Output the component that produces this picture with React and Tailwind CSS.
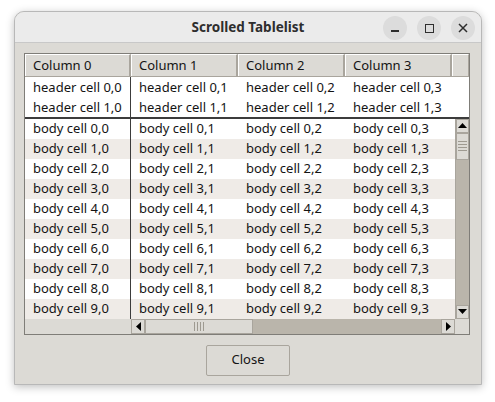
import React from "react";

const cols = [0, 1, 2, 3];
const bodyRows = [0, 1, 2, 3, 4, 5, 6, 7, 8, 9];

const ArrowUp = () => (
  <svg width="9" height="5" viewBox="0 0 9 5">
    <polygon points="0,5 9,5 4.5,0" fill="#000" />
  </svg>
);
const ArrowDown = () => (
  <svg width="9" height="5" viewBox="0 0 9 5">
    <polygon points="0,0 9,0 4.5,5" fill="#000" />
  </svg>
);
const ArrowLeft = () => (
  <svg width="5" height="9" viewBox="0 0 5 9">
    <polygon points="5,0 5,9 0,4.5" fill="#000" />
  </svg>
);
const ArrowRight = () => (
  <svg width="5" height="9" viewBox="0 0 5 9">
    <polygon points="0,0 0,9 5,4.5" fill="#000" />
  </svg>
);

const App = () => {
  return (
    <div
      className="w-[495px] h-[402px] bg-white pt-[11px] pl-[14px] text-[13px] text-[#141414]"
      style={{ fontFamily: '"Noto Sans", sans-serif' }}
    >
      <div className="w-[468px] h-[374px] flex flex-col rounded-t-[10px] border border-[#b8b8b8] bg-[#dcdad5] shadow-[0_2px_8px_rgba(0,0,0,0.25)] overflow-hidden">
        {/* title bar */}
        <div className="h-[31px] shrink-0 bg-[#ebebeb] border-b border-[#c8c8c8] flex items-center relative">
          <div className="flex-1 text-center font-bold text-[13.5px] text-[#2e2e2e]">Scrolled Tablelist</div>
          <div className="absolute right-[6px] top-[4px] flex gap-[10px]">
            <div className="w-[24px] h-[24px] rounded-full bg-[#dcdcdc] flex items-center justify-center">
              <div className="w-[8px] h-[1.5px] bg-[#2e2e2e] mt-[6px]" />
            </div>
            <div className="w-[24px] h-[24px] rounded-full bg-[#dcdcdc] flex items-center justify-center">
              <div className="w-[9px] h-[9px] border-[1.5px] border-[#2e2e2e]" />
            </div>
            <div className="w-[24px] h-[24px] rounded-full bg-[#dcdcdc] flex items-center justify-center">
              <svg width="10" height="10" viewBox="0 0 10 10">
                <path d="M1 1 L9 9 M9 1 L1 9" stroke="#2e2e2e" strokeWidth="1.5" />
              </svg>
            </div>
          </div>
        </div>

        {/* content */}
        <div className="flex-1 flex flex-col px-[9px] pt-[10px]">
          <div className="w-[446px] border border-[#7f7d78] bg-[#dcdad5]">
            {/* column headers */}
            <div className="flex h-[23px] border-b border-[#a9a59d]">
              {cols.map((c) => (
                <div
                  key={c}
                  className={`${c === 0 ? "w-[106px]" : "w-[107px]"} h-full flex items-center pl-[7px] pt-px border-t border-l border-white border-r-2 border-r-[#a9a59d]`}
                >
                  Column {c}
                </div>
              ))}
              <div className="flex-1 h-full border-t border-l border-white border-r border-r-[#a9a59d]" />
            </div>

            {/* title rows */}
            <div className="bg-white">
              {[0, 1].map((r) => (
                <div key={r} className="flex h-[20px]">
                  {cols.map((c) => (
                    <div
                      key={c}
                      className={`${c === 0 ? "w-[106px] border-r border-[#3c3c3c]" : "w-[107px]"} h-full flex items-center pl-[8px] pt-px whitespace-nowrap`}
                    >
                      header cell {r},{c}
                    </div>
                  ))}
                </div>
              ))}
            </div>
            <div className="h-[1.5px] bg-[#3c3c3c]" />

            {/* body + vertical scrollbar */}
            <div className="flex">
              <div className="w-[430px]">
                {bodyRows.map((r) => (
                  <div key={r} className={`flex h-[20px] ${r % 2 ? "bg-[#efebe7]" : "bg-white"}`}>
                    {cols.map((c) => (
                      <div
                        key={c}
                        className={`${c === 0 ? "w-[106px] border-r border-[#3c3c3c]" : "w-[107px]"} h-full flex items-center pl-[8px] pt-px whitespace-nowrap`}
                      >
                        body cell {r},{c}
                      </div>
                    ))}
                  </div>
                ))}
              </div>
              <div className="w-[14px] h-[200px] bg-[#bab5ab] flex flex-col border-l border-[#a9a59d]">
                <div className="h-[14px] bg-[#dcdad5] border border-[#a9a59d] flex items-center justify-center">
                  <ArrowUp />
                </div>
                <div className="h-[27px] bg-[#dcdad5] border border-[#a9a59d] flex flex-col items-center justify-center gap-[2px]">
                  <div className="w-[9px] h-px bg-[#9e9a91]" />
                  <div className="w-[9px] h-px bg-[#9e9a91]" />
                  <div className="w-[9px] h-px bg-[#9e9a91]" />
                  <div className="w-[9px] h-px bg-[#9e9a91]" />
                </div>
                <div className="flex-1" />
                <div className="h-[14px] bg-[#dcdad5] border border-[#a9a59d] flex items-center justify-center">
                  <ArrowDown />
                </div>
              </div>
            </div>

            {/* horizontal scrollbar */}
            <div className="flex h-[15px]">
              <div className="w-[106px]" />
              <div className="w-[324px] bg-[#bab5ab] flex">
                <div className="w-[14px] bg-[#dcdad5] border border-[#a9a59d] flex items-center justify-center">
                  <ArrowLeft />
                </div>
                <div className="w-[108px] bg-[#dcdad5] border border-[#a9a59d] flex items-center justify-center gap-[2px]">
                  <div className="w-px h-[9px] bg-[#9e9a91]" />
                  <div className="w-px h-[9px] bg-[#9e9a91]" />
                  <div className="w-px h-[9px] bg-[#9e9a91]" />
                  <div className="w-px h-[9px] bg-[#9e9a91]" />
                </div>
                <div className="flex-1" />
                <div className="w-[14px] bg-[#dcdad5] border border-[#a9a59d] flex items-center justify-center">
                  <ArrowRight />
                </div>
              </div>
              <div className="flex-1" />
            </div>
          </div>

          <div className="flex justify-center pt-[10px]">
            <div className="w-[84px] h-[31px] border border-[#a9a59d] rounded-[2px] bg-[#dcdad5] flex items-center justify-center">
              Close
            </div>
          </div>
        </div>
      </div>
    </div>
  );
};

export default App;
